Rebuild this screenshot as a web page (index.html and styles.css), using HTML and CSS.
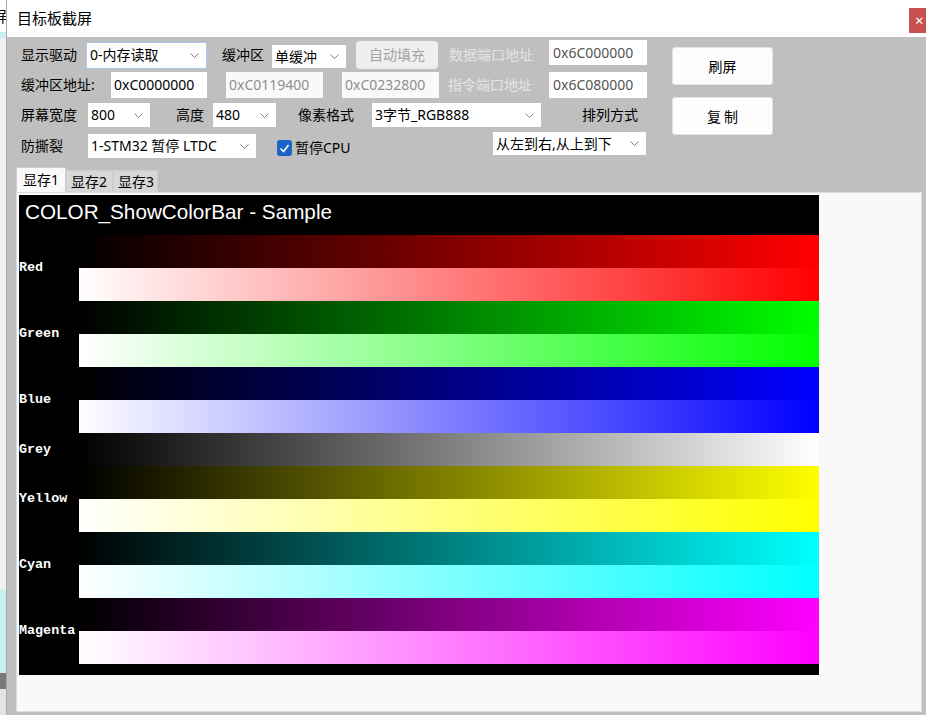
FILE: index.html
```html
<!DOCTYPE html>
<html>
<head>
<meta charset="utf-8">
<title>目标板截屏</title>
<link rel="stylesheet" href="styles.css">
</head>
<body>
<div class="desk">
  <div class="bgapp">
    <div class="bg-top"><span class="bg-char">屏</span></div>
    <div class="bg-cyan1"></div>
    <div class="bg-mid"></div>
    <div class="bg-cyan2"></div>
    <div class="bg-dark"></div>
    <div class="bg-bot"></div>
  </div>
  <div class="window">
    <div class="titlebar">
      <span class="title">目标板截屏</span>
      <span class="close">×</span>
    </div>
    <div class="wbody">
      <div class="controls">
        <div class="rows">
          <div class="row r1">
            <span class="lb w65">显示驱动</span>
            <div class="combo focus w121 h27"><span>0-内存读取</span><svg viewBox="0 0 9 5"><polyline points="0.5,0.5 4.5,4.5 8.5,0.5"/></svg></div>
            <span class="lb w65 pl15">缓冲区</span>
            <div class="combo w74 h23 mt3"><span>单缓冲</span><svg viewBox="0 0 9 5"><polyline points="0.5,0.5 4.5,4.5 8.5,0.5"/></svg></div>
            <div class="abtn">自动填充</div>
            <span class="lb dislbl w111 pl11">数据端口地址</span>
            <div class="tb gry w98 h25 top">0x6C000000</div>
          </div>
          <div class="row r2">
            <span class="lb w90">缓冲区地址:</span>
            <div class="tb w96 h26">0xC0000000</div>
            <div class="tb dis w97 h26 ml19">0xC0119400</div>
            <div class="tb dis w97 h26 ml19">0xC0232800</div>
            <span class="lb dislbl w110 pl9">指令端口地址</span>
            <div class="tb gry w98 h26">0x6C080000</div>
          </div>
          <div class="row r3">
            <span class="lb w67">屏幕宽度</span>
            <div class="combo w62 h24"><span>800</span><svg viewBox="0 0 9 5"><polyline points="0.5,0.5 4.5,4.5 8.5,0.5"/></svg></div>
            <span class="lb w63 pl26">高度</span>
            <div class="combo w63 h24"><span>480</span><svg viewBox="0 0 9 5"><polyline points="0.5,0.5 4.5,4.5 8.5,0.5"/></svg></div>
            <span class="lb w96 pl22">像素格式</span>
            <div class="combo w169 h24"><span>3字节_RGB888</span><svg viewBox="0 0 9 5"><polyline points="0.5,0.5 4.5,4.5 8.5,0.5"/></svg></div>
            <span class="lb pl41">排列方式</span>
          </div>
          <div class="row r4">
            <span class="lb w67">防撕裂</span>
            <div class="combo w168 h24"><span>1-STM32 暂停 LTDC</span><svg viewBox="0 0 9 5"><polyline points="0.5,0.5 4.5,4.5 8.5,0.5"/></svg></div>
            <div class="chkgrp">
              <span class="chk"><svg viewBox="0 0 15 16"><polyline points="3.5,8.5 6.5,11.5 11.5,5"/></svg></span>
              <span class="chklbl">暂停CPU</span>
            </div>
            <div class="combo w153 h23 top mt2"><span>从左到右,从上到下</span><svg viewBox="0 0 9 5"><polyline points="0.5,0.5 4.5,4.5 8.5,0.5"/></svg></div>
          </div>
        </div>
        <div class="btncol">
          <div class="btn">刷屏</div>
          <div class="btn">复 制</div>
        </div>
      </div>
      <div class="tabs">
        <div class="tab sel">显存1</div>
        <div class="tab t2">显存2</div>
        <div class="tab t3">显存3</div>
      </div>
      <div class="panel">
        <div class="lcd">
          <div class="lcd-title">COLOR_ShowColorBar - Sample</div>
          <div class="grp c-red"><div class="clbl">Red</div><div class="bars"><div class="bar dk"></div><div class="bar lt"></div></div></div>
          <div class="grp c-green"><div class="clbl">Green</div><div class="bars"><div class="bar dk"></div><div class="bar lt"></div></div></div>
          <div class="grp c-blue"><div class="clbl">Blue</div><div class="bars"><div class="bar dk"></div><div class="bar lt"></div></div></div>
          <div class="grp one c-grey"><div class="clbl">Grey</div><div class="bars"><div class="bar dk"></div></div></div>
          <div class="grp c-yellow"><div class="clbl">Yellow</div><div class="bars"><div class="bar dk"></div><div class="bar lt"></div></div></div>
          <div class="grp c-cyan"><div class="clbl">Cyan</div><div class="bars"><div class="bar dk"></div><div class="bar lt"></div></div></div>
          <div class="grp c-magenta"><div class="clbl">Magenta</div><div class="bars"><div class="bar dk"></div><div class="bar lt"></div></div></div>
        </div>
      </div>
    </div>
  </div>
</div>
</body>
</html>
```

FILE: styles.css
```css
* { box-sizing: border-box; }
html, body { margin: 0; padding: 0; }
body {
  width: 926px;
  height: 715px;
  overflow: hidden;
  font-family: "Noto Sans", "Noto Sans CJK SC", sans-serif;
  font-size: 14px;
  color: #000;
  background: #bfbfbf;
}
.desk { display: flex; height: 715px; }

/* background application peeking at the left */
.bgapp {
  width: 7px;
  flex: none;
  display: flex;
  flex-direction: column;
  overflow: hidden;
  border-right: 1px solid #a8a8a8;
}
.bg-top { height: 32px; background: #fff; overflow: hidden; display: flex; align-items: center; }
.bg-char { font-family: "Noto Sans CJK SC", sans-serif; font-size: 15px; margin-left: -8px; line-height: 18px; }
.bg-cyan1 { height: 6px; background: #cdeef4; }
.bg-mid { height: 552px; background: #f0f0f0; }
.bg-cyan2 { height: 83px; background: #c9eff2; }
.bg-dark { height: 16px; background: #7a7a7a; }
.bg-bot { flex: 1; background: #e4e4e4; }

.window { flex: 1; min-width: 0; display: flex; flex-direction: column; }
.titlebar {
  height: 37px;
  flex: none;
  background: #fff;
  display: flex;
  align-items: flex-start;
  padding-left: 10px;
}
.title {
  font-family: "Noto Sans CJK SC", sans-serif;
  font-size: 15px;
  line-height: 20px;
  margin-top: 8px;
}
.close {
  margin-left: auto;
  margin-right: -13px;
  margin-top: 8px;
  width: 30px;
  height: 25px;
  background: #c75050;
  color: #fff;
  font-size: 15px;
  line-height: 25px;
  padding-left: 6px;
}

.wbody { flex: 1; display: flex; flex-direction: column; background: #bfbfbf; }

.controls { height: 130px; flex: none; display: flex; padding: 3px 0 0 14px; }
.rows { width: 651px; flex: none; }
.row { display: flex; align-items: center; height: 30px; line-height: 20px; }
.row.r4 { height: 32px; }

.lb { flex: none; white-space: nowrap; }
.dislbl { color: #e4e4e4; }

.w65 { width: 65px; } .w67 { width: 67px; } .w90 { width: 90px; } .w96 { width: 96px; }
.w97 { width: 97px; } .w98 { width: 98px; } .w110 { width: 110px; } .w111 { width: 111px; }
.w121 { width: 121px; } .w74 { width: 74px; } .w62 { width: 62px; } .w63 { width: 63px; }
.w153 { width: 153px; } .w168 { width: 168px; } .w169 { width: 169px; }
.h23 { height: 23px; } .h24 { height: 24px; } .h25 { height: 25px; } .h26 { height: 26px; } .h27 { height: 27px; }
.pl9 { padding-left: 9px; } .pl11 { padding-left: 11px; } .pl15 { padding-left: 15px; }
.pl22 { padding-left: 22px; } .pl26 { padding-left: 26px; } .pl41 { padding-left: 41px; }
.ml19 { margin-left: 19px; }
.mt2 { margin-top: 2px; } .mt3 { margin-top: 3px; }
.top { align-self: flex-start; }

.combo {
  flex: none;
  display: flex;
  align-items: center;
  justify-content: space-between;
  background: #fff;
  padding: 0 7px 0 3px;
  white-space: nowrap;
}
.combo.focus { border: 1px solid #a6c8ec; padding-left: 3px; }
.combo svg { width: 9px; height: 5px; flex: none; }
.combo polyline { fill: none; stroke: #7c7c7c; stroke-width: 1; }

.tb {
  flex: none;
  display: flex;
  align-items: center;
  background: #fff;
  padding-left: 3px;
}
.tb.gry { color: #555; padding-left: 4px; }
.tb.dis { background: #f9f9f9; color: #8e8e8e; }

.abtn {
  flex: none;
  margin-left: 10px;
  width: 82px;
  height: 28px;
  background: #efefef;
  border-radius: 4px;
  color: #a2a2a2;
  display: flex;
  align-items: center;
  justify-content: center;
}

.chkgrp { width: 237px; flex: none; display: flex; align-items: center; padding-left: 21px; margin-top: 4px; }
.chk {
  width: 15px;
  height: 16px;
  background: #1b63c6;
  border-radius: 3px;
  display: flex;
}
.chk svg { width: 15px; height: 16px; }
.chk polyline { fill: none; stroke: #fff; stroke-width: 1.6; }
.chklbl { margin-left: 3px; }

.btncol { display: flex; flex-direction: column; gap: 12px; padding-top: 7px; }
.btn {
  width: 101px;
  height: 38px;
  background: #fdfdfd;
  border: 1px solid #e3e3e3;
  border-radius: 3px;
  display: flex;
  align-items: center;
  justify-content: center;
  font-family: "Noto Sans CJK SC", sans-serif;
}

.tabs { height: 25px; flex: none; display: flex; align-items: flex-end; margin-left: 9px; line-height: 18px; }
.tab {
  height: 22px;
  background: #d7d7d7;
  border: 1px solid #cdcdcd;
  border-bottom: none;
  display: flex;
  align-items: center;
  padding-left: 4px;
}
.tab.sel { height: 25px; width: 50px; background: #f9f9f9; padding-left: 6px; }
.tab.t2 { width: 47px; }
.tab.t3 { width: 45px; }

.panel {
  flex: 1;
  margin: 0 4px 3px 9px;
  background: #f9f9f9;
  border: 1px solid #dcdcdc;
  padding: 2px 0 0 2px;
}

.lcd { width: 800px; height: 480px; background: #000; color: #fff; }
.lcd-title {
  height: 40px;
  font-family: "Liberation Sans", Arial, sans-serif;
  font-size: 20.7px;
  line-height: 22px;
  padding: 6px 0 0 6px;
}
.grp { display: flex; height: 66px; }
.grp.one { height: 33px; }
.clbl {
  width: 60px;
  flex: none;
  display: flex;
  align-items: center;
  font-family: "Liberation Mono", "Courier New", monospace;
  font-weight: bold;
  font-size: 13.4px;
  line-height: 14px;
}
.bars { flex: 1; display: flex; flex-direction: column; }
.bar { height: 33px; }
.bar.dk { background: linear-gradient(90deg, #000, var(--c)); }
.bar.lt { background: linear-gradient(90deg, #fff, var(--c)); }
.c-red { --c: #ff0000; }
.c-green { --c: #00ff00; }
.c-blue { --c: #0000ff; }
.c-grey { --c: #ffffff; }
.c-yellow { --c: #ffff00; }
.c-cyan { --c: #00ffff; }
.c-magenta { --c: #ff00ff; }
```
